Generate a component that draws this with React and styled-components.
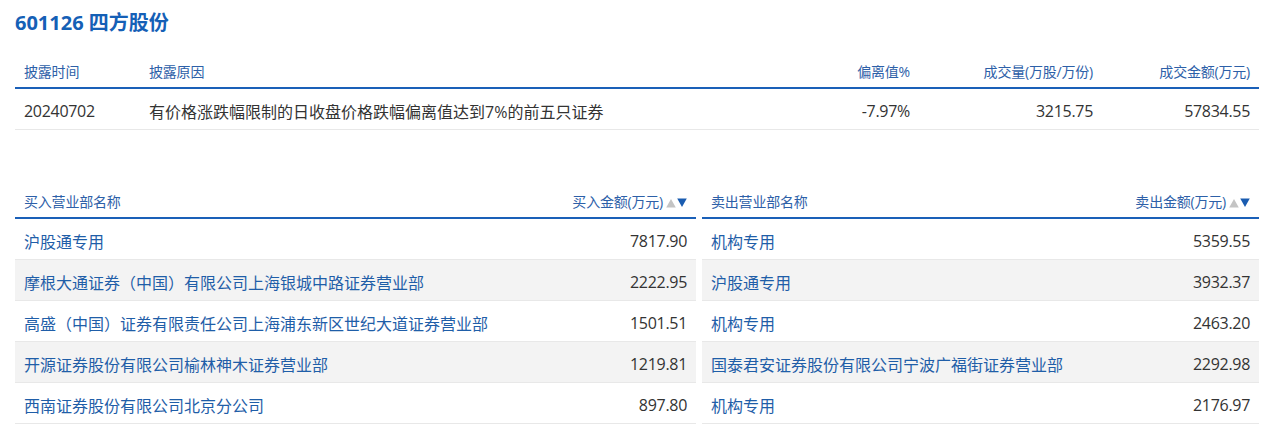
import React from "react";
import styled, { createGlobalStyle } from "styled-components";

const GlobalStyle = createGlobalStyle`
  body {
    margin: 0;
    background: #fff;
    font-family: "Open Sans", "Noto Sans CJK SC", sans-serif;
  }
`;

const Page = styled.div`
  padding: 9px 5px 0 15px;
  width: 1264px;
  box-sizing: border-box;
`;

const Title = styled.h1`
  margin: 0;
  font-size: 20px;
  font-weight: 700;
  color: #1560b6;
  line-height: 28px;
`;

const Table = styled.table`
  width: 100%;
  border-collapse: collapse;
  table-layout: fixed;
`;

const Th = styled.th`
  font-size: 14px;
  font-weight: 400;
  color: #2d60a8;
  text-align: ${(p) => p.$align || "left"};
  padding: 0 9px;
  height: 33px;
  border-bottom: 2px solid #1a60b8;
  white-space: nowrap;
  box-sizing: border-box;
  letter-spacing: -0.2px;
`;

const Td = styled.td`
  font-size: 16px;
  color: ${(p) => (p.$link ? "#1f5ea8" : "#333")};
  text-align: ${(p) => p.$align || "left"};
  padding: 3px 9px 0;
  height: 37px;
  border-bottom: 1px solid #e8e8e8;
  white-space: nowrap;
  background: ${(p) => (p.$gray ? "#f3f3f3" : "#fff")};
`;

const Num = styled(Td)`
  letter-spacing: -0.3px;
`;

const DisclosureWrap = styled.div`
  margin-top: 18px;
`;

const Split = styled.div`
  display: grid;
  grid-template-columns: 681px 557px;
  column-gap: 6px;
  margin-top: 55px;
`;

const SortIcons = styled.span`
  display: inline-flex;
  align-items: center;
  gap: 1px;
  margin-left: 3px;
  vertical-align: -1px;
`;

const Arrow = ({ up, color }) => (
  <svg width="10" height="10" viewBox="0 0 10 10">
    {up ? (
      <path d="M5 1 L9.8 9.5 L0.2 9.5 Z" fill={color} />
    ) : (
      <path d="M0.2 0.5 L9.8 0.5 L5 9 Z" fill={color} />
    )}
  </svg>
);

const Sort = () => (
  <SortIcons>
    <Arrow up color="#c4c4c4" />
    <Arrow color="#1a5cb0" />
  </SortIcons>
);

const buys = [
  ["沪股通专用", "7817.90"],
  ["摩根大通证券（中国）有限公司上海银城中路证券营业部", "2222.95"],
  ["高盛（中国）证券有限责任公司上海浦东新区世纪大道证券营业部", "1501.51"],
  ["开源证券股份有限公司榆林神木证券营业部", "1219.81"],
  ["西南证券股份有限公司北京分公司", "897.80"],
];

const sells = [
  ["机构专用", "5359.55"],
  ["沪股通专用", "3932.37"],
  ["机构专用", "2463.20"],
  ["国泰君安证券股份有限公司宁波广福街证券营业部", "2292.98"],
  ["机构专用", "2176.97"],
];

const DeptTable = ({ nameLabel, amountLabel, rows, amountWidth }) => (
  <Table>
    <colgroup>
      <col />
      <col style={{ width: amountWidth }} />
    </colgroup>
    <thead>
      <tr>
        <Th>{nameLabel}</Th>
        <Th $align="right">
          {amountLabel}
          <Sort />
        </Th>
      </tr>
    </thead>
    <tbody>
      {rows.map(([name, amount], i) => (
        <tr key={i}>
          <Td $link $gray={i % 2 === 1}>{name}</Td>
          <Num $align="right" $gray={i % 2 === 1}>{amount}</Num>
        </tr>
      ))}
    </tbody>
  </Table>
);

export default function App() {
  return (
    <Page>
      <GlobalStyle />
      <Title>601126 四方股份</Title>
      <DisclosureWrap>
        <Table>
          <colgroup>
            <col style={{ width: 125 }} />
            <col />
            <col style={{ width: 130 }} />
            <col style={{ width: 183 }} />
            <col style={{ width: 157 }} />
          </colgroup>
          <thead>
            <tr>
              <Th>披露时间</Th>
              <Th>披露原因</Th>
              <Th $align="right">偏离值%</Th>
              <Th $align="right">成交量(万股/万份)</Th>
              <Th $align="right">成交金额(万元)</Th>
            </tr>
          </thead>
          <tbody>
            <tr>
              <Num>20240702</Num>
              <Td>有价格涨跌幅限制的日收盘价格跌幅偏离值达到7%的前五只证券</Td>
              <Num $align="right">-7.97%</Num>
              <Num $align="right">3215.75</Num>
              <Num $align="right">57834.55</Num>
            </tr>
          </tbody>
        </Table>
      </DisclosureWrap>
      <Split>
        <DeptTable
          nameLabel="买入营业部名称"
          amountLabel="买入金额(万元)"
          rows={buys}
          amountWidth={160}
        />
        <DeptTable
          nameLabel="卖出营业部名称"
          amountLabel="卖出金额(万元)"
          rows={sells}
          amountWidth={160}
        />
      </Split>
    </Page>
  );
}
